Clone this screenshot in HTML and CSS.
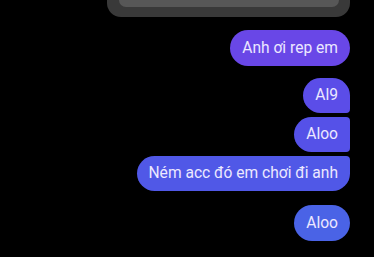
FILE: index.html
```html
<!DOCTYPE html>
<html>
<head>
    <meta charset="utf-8">
    <title>Chat</title>
    <link rel="stylesheet" href="styles.css">
</head>
<body>
    <div class="chat">
        <div class="card">
            <div class="card-inner"></div>
        </div>
        <div class="messages">
            <div class="bubble solo c1">Anh ơi rep em</div>
            <div class="group">
                <div class="bubble first c2">Al9</div>
                <div class="bubble mid c3">Aloo</div>
                <div class="bubble last c4">Ném acc đó em chơi đi anh</div>
            </div>
            <div class="bubble solo c5">Aloo</div>
        </div>
    </div>
</body>
</html>
```

FILE: styles.css
```css
body {
    margin: 0;
    background: #000000;
    font-family: Roboto, "Noto Sans", sans-serif;
}

.chat {
    width: 374px;
    height: 257px;
    overflow: hidden;
}

.card {
    margin-left: 107px;
    width: 243px;
    height: 17px;
    background: #393939;
    border-radius: 0 0 14px 14px;
    display: flex;
    justify-content: center;
}

.card-inner {
    width: 220px;
    height: 7px;
    background: #575757;
    border-radius: 0 0 8px 8px;
}

.messages {
    display: flex;
    flex-direction: column;
    align-items: flex-end;
    padding: 13px 24px 0 0;
}

.group {
    display: flex;
    flex-direction: column;
    align-items: flex-end;
    gap: 4px;
    margin: 12px 0 14px;
}

.bubble {
    height: 35px;
    line-height: 35px;
    padding: 0 12px;
    font-size: 15.6px;
    color: #ece8ff;
    border-radius: 18px;
    white-space: nowrap;
}

.bubble.solo {
    height: 36px;
    line-height: 36px;
}

.bubble.first {
    border-radius: 18px 18px 4px 18px;
}

.bubble.mid {
    border-radius: 18px 4px 4px 18px;
}

.bubble.last {
    border-radius: 18px 4px 18px 18px;
}

.c1 { background: #6947e7; }
.c2 { background: #5b4de8; }
.c3 { background: #5551e8; }
.c4 { background: #5058e7; }
.c5 { background: #4a63e6; }
```
